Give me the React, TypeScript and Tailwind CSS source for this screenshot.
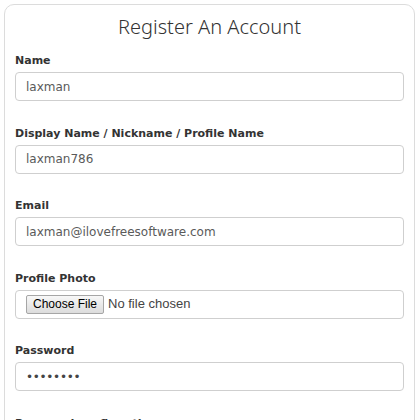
const labelCls =
  "block text-[11px] leading-[15px] font-bold text-[#333] mb-[4px] [font-family:'DejaVu_Sans',Verdana,sans-serif]"
const boxCls =
  "h-[29px] w-full border border-[#cfcfcf] rounded-[4px] bg-white flex items-center pl-[10px] text-[12px] text-[#5a5a5a] [font-family:'DejaVu_Sans',Verdana,sans-serif]"

function Field({ label, children }: { label: string; children: React.ReactNode }) {
  return (
    <div className="mb-[24.5px]">
      <label className={labelCls}>{label}</label>
      {children}
    </div>
  )
}

export default function App() {
  return (
    <div className="w-[420px] h-[420px] overflow-hidden bg-white pt-[4px] pl-[4px] pr-[5px]">
      <div className="border border-[#dcdcdc] rounded-[10px] px-[10px] pt-[8px] h-[440px]">
        {/* Title */}
        <h1 className="text-center text-[20px] leading-[28px] font-light text-[#333] mb-[12px] [font-family:'Noto_Sans',sans-serif]">
          Register An Account
        </h1>

        <Field label="Name">
          <div className={boxCls}>laxman</div>
        </Field>

        <Field label="Display Name / Nickname / Profile Name">
          <div className={boxCls}>laxman786</div>
        </Field>

        <Field label="Email">
          <div className={boxCls}>laxman@ilovefreesoftware.com</div>
        </Field>

        <Field label="Profile Photo">
          <div className={boxCls}>
            <span className="h-[19px] px-[6px] flex items-center border border-[#a6a6a6] rounded-[2px] bg-gradient-to-b from-[#f8f8f8] to-[#dcdcdc] text-[12px] text-black [font-family:'Liberation_Sans',Arial,sans-serif]">
              Choose File
            </span>
            <span className="ml-[4px] text-[13px] text-[#444] [font-family:'Liberation_Sans',Arial,sans-serif]">
              No file chosen
            </span>
          </div>
        </Field>

        <Field label="Password">
          <div className={boxCls}>
            <span className="text-[12px] tracking-[-0.3px] text-[#444]">••••••••</span>
          </div>
        </Field>

        <Field label="Password confirmation">
          <div className={boxCls}></div>
        </Field>
      </div>
    </div>
  )
}
